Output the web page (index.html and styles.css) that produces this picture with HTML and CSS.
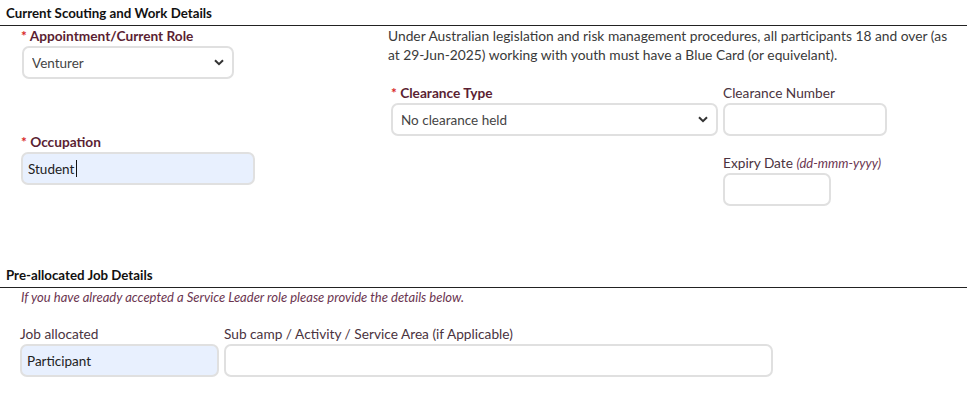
FILE: index.html
```html
<!DOCTYPE html>
<html lang="en">
<head>
  <meta charset="UTF-8">
  <meta name="viewport" content="width=device-width, initial-scale=1.0">
  <title>Scouting and Work Details</title>
  <link rel="stylesheet" href="styles.css">
</head>
<body>

  <!-- Current Scouting and Work Details -->
  <div class="section-title">Current Scouting and Work Details</div>

  <div class="work-details">
    <div class="left-col">
      <div class="field">
        <label class="required">Appointment/Current Role</label>
        <div class="select-wrap role-select">
          <select>
            <option>Venturer</option>
          </select>
          <span class="chevron">
            <svg width="10" height="7" viewBox="0 0 10 7"><path d="M1 1.2l4 4 4-4" fill="none" stroke="#333" stroke-width="2"/></svg>
          </span>
        </div>
      </div>

      <div class="field occupation">
        <label class="required">Occupation</label>
        <div class="caret-wrap">
          <input type="text" class="filled occupation-input" value="Student">
          <span class="caret"></span>
        </div>
      </div>
    </div>

    <div class="right-col">
      <p class="notice">Under Australian legislation and risk management procedures, all participants 18 and over (as at 29-Jun-2025) working with youth must have a Blue Card (or equivelant).</p>

      <div class="clearance-grid">
        <div class="field">
          <label class="required">Clearance Type</label>
          <div class="select-wrap">
            <select>
              <option>No clearance held</option>
            </select>
            <span class="chevron">
              <svg width="10" height="7" viewBox="0 0 10 7"><path d="M1 1.2l4 4 4-4" fill="none" stroke="#333" stroke-width="2"/></svg>
            </span>
          </div>
        </div>
        <div class="field">
          <label class="plain">Clearance Number</label>
          <input type="text" class="number-input">
        </div>
        <div class="field expiry">
          <label class="plain">Expiry Date <em>(dd-mmm-yyyy)</em></label>
          <input type="text" class="expiry-input">
        </div>
      </div>
    </div>
  </div>

  <!-- Pre-allocated Job Details -->
  <div class="section-title job-title">Pre-allocated Job Details</div>
  <p class="hint">If you have already accepted a Service Leader role please provide the details below.</p>

  <div class="job-row">
    <div class="field">
      <label class="plain">Job allocated</label>
      <input type="text" class="filled job-input" value="Participant">
    </div>
    <div class="field">
      <label class="plain">Sub camp / Activity / Service Area (if Applicable)</label>
      <input type="text" class="area-input">
    </div>
  </div>

</body>
</html>
```

FILE: styles.css
```css
* {
  margin: 0;
  padding: 0;
  box-sizing: border-box;
}

body {
  font-family: "Lato", "Open Sans", Arial, sans-serif;
  background: #fff;
  color: #3a3a3a;
  width: 967px;
  height: 399px;
  overflow: hidden;
}

.section-title {
  height: 26px;
  line-height: 26px;
  padding-left: 6px;
  font-size: 13.3px;
  font-weight: bold;
  color: #111;
  border-bottom: 1px solid #222;
}

.job-title {
  margin-top: 56px;
}

.work-details {
  display: flex;
}

.left-col {
  width: 388px;
  padding-left: 21px;
}

.right-col {
  flex: 1;
}

.field label {
  display: block;
  height: 20px;
  line-height: 20px;
  font-size: 13.7px;
}

.required {
  font-weight: bold;
  color: #5b1f33;
}

.required::before {
  content: "* ";
  color: #d81f26;
}

.plain {
  color: #4a3340;
}

.plain em {
  font-size: 13px;
  color: #6b3550;
}

input,
select {
  height: 33px;
  border: 2px solid #e0e0e0;
  border-radius: 7px;
  background: #fff;
  font-family: inherit;
  font-size: 13.5px;
  color: #444;
  outline: none;
}

select {
  width: 100%;
  padding: 0 24px 0 8px;
  appearance: none;
  -webkit-appearance: none;
}

input {
  padding: 0 5px;
}

.filled {
  background: #e8f0fe;
  color: #222;
}

.select-wrap {
  position: relative;
}

.chevron {
  position: absolute;
  right: 10px;
  top: 13px;
  line-height: 0;
}

.role-select {
  width: 212px;
  margin-left: 1px;
}

.occupation {
  margin-top: 53px;
}

.occupation-input {
  width: 234px;
}

.caret-wrap {
  position: relative;
}

.caret {
  position: absolute;
  left: 55px;
  top: 8px;
  width: 1px;
  height: 17px;
  background: #111;
}

.notice {
  font-size: 13.8px;
  line-height: 19px;
  color: #3a3a3a;
  padding-right: 18px;
}

.clearance-grid {
  display: grid;
  grid-template-columns: 327px 164px;
  column-gap: 5px;
  padding-left: 3px;
  margin-top: 19px;
}

.number-input {
  width: 164px;
}

.expiry {
  grid-column: 2;
  margin-top: 17px;
}

.expiry-input {
  width: 108px;
}

.hint {
  padding-left: 21px;
  font-size: 13px;
  line-height: 18px;
  font-style: italic;
  color: #6b3550;
}

.job-row {
  display: flex;
  gap: 5px;
  padding-left: 20px;
  margin-top: 18px;
}

.job-input {
  width: 199px;
}

.area-input {
  width: 549px;
}
```
